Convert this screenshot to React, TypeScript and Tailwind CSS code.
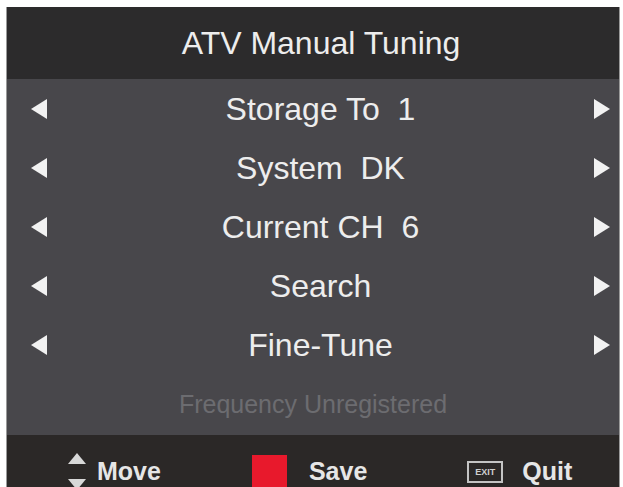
const rows = [
  { label: 'Storage To  1' },
  { label: 'System  DK' },
  { label: 'Current CH  6' },
  { label: 'Search' },
  { label: 'Fine-Tune' },
]

function LeftArrow() {
  return (
    <svg width="18" height="22" viewBox="0 0 18 22" className="shrink-0">
      <polygon points="1,11 17,1 17,21" fill="#f2f2f2" />
    </svg>
  )
}

function RightArrow() {
  return (
    <svg width="18" height="22" viewBox="0 0 18 22" className="shrink-0">
      <polygon points="17,11 1,1 1,21" fill="#f2f2f2" />
    </svg>
  )
}

export default function App() {
  return (
    <div className="h-[487px] overflow-hidden bg-white pl-[6px] pr-[3px] pt-[7px]" style={{ fontFamily: '"Liberation Sans", Arial, sans-serif' }}>
      <div className="border-x border-[#9a9a9a] bg-[#48474b]">
        {/* Header */}
        <div className="flex h-[72px] items-center justify-center bg-[#2c2b2c] pl-[16px]">
          <span className="text-[32px] text-[#ededed]">ATV Manual Tuning</span>
        </div>

        {/* Option rows */}
        {rows.map((row) => (
          <div key={row.label} className="flex h-[59px] items-center pl-[23px] pr-[8px]">
            <LeftArrow />
            <span className="flex-1 whitespace-pre text-center text-[32px] leading-none text-[#ededed]">{row.label}</span>
            <RightArrow />
          </div>
        ))}

        <div className="flex h-[61px] items-center justify-center">
          <span className="text-[25px] text-[#6c6c70]">Frequency Unregistered</span>
        </div>

        {/* Footer hints */}
        <div className="flex h-[74px] items-center bg-[#2b2827] pl-[60px] text-[25px] font-bold text-[#e6e6e6]">
          <svg width="20" height="40" viewBox="0 0 20 40" className="shrink-0">
            <polygon points="10,1 19,12 1,12" fill="#d8d8d8" />
            <polygon points="1,27 19,27 10,38" fill="#d8d8d8" />
          </svg>
          <span className="ml-[10px]">Move</span>
          <div className="ml-[91px] h-[35px] w-[35px] shrink-0 bg-[#e8192c]" />
          <span className="ml-[22px]">Save</span>
          <div className="ml-[100px] flex h-[22px] w-[36px] shrink-0 items-center justify-center border-2 border-[#c4c4c4]">
            <span className="text-[9px] font-bold leading-none text-[#cfcfcf]">EXIT</span>
          </div>
          <span className="ml-[19px]">Quit</span>
        </div>
      </div>
    </div>
  )
}
